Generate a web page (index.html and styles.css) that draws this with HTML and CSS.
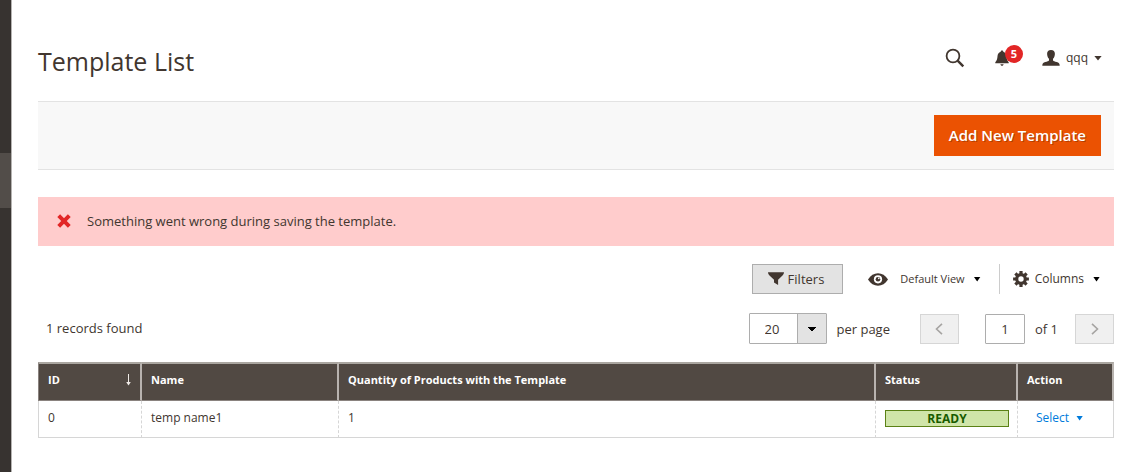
FILE: index.html
```html
<!DOCTYPE html>
<html lang="en">
<head>
<meta charset="utf-8">
<meta name="viewport" content="width=device-width, initial-scale=1">
<title>Template List</title>
<link rel="stylesheet" href="styles.css">
</head>
<body>
<div class="layout">
  <nav class="sidebar" aria-label="Main menu"><div class="sidebar-current"></div></nav>
  <main class="content">
    <header class="page-header">
      <h1 class="page-title">Template List</h1>
      <div class="header-tools">
        <button class="plain search" type="button" aria-label="Search">
          <svg width="20" height="20" viewBox="0 0 20 20" fill="none" stroke="#41362f"><circle cx="8" cy="8" r="6.400" stroke-width="1.800"/><path d="M12.600 12.600 18.300 18.300" stroke-width="2.400"/></svg>
        </button>
        <button class="plain bell" type="button" aria-label="Notifications">
          <svg width="14" height="16" viewBox="0 0 14 16" fill="#41362f"><path d="M7 0.5C7.9 .5 8.3 1 8.3 1.7 10.4 2.3 11.4 4 11.5 6.3 11.6 9 12.3 10.8 13.7 12.3V13.3H.3V12.3C1.700 10.800 2.400 9 2.500 6.300 2.600 4 3.600 2.300 5.700 1.700 5.700 1 6.100.5 7 .5Z"/><path d="M5.400 14.200H8.600C8.500 15.100 7.900 15.700 7 15.700 6.100 15.700 5.500 15.100 5.400 14.200Z"/></svg>
          <span class="badge">5</span>
        </button>
        <button class="plain account" type="button">
          <svg width="18" height="16" viewBox="0 0 18 16" fill="#41362f"><path d="M9 0C11.600 0 12.900 1.500 12.900 3.700 12.900 6 12.100 7.700 11 8.800V10.200C11.300 11.200 12.900 11.500 14.700 12 16.800 12.600 17.700 13.500 17.700 15.700H.3C.3 13.500 1.200 12.600 3.300 12 5.100 11.500 6.700 11.200 7 10.200V8.800C5.900 7.700 5.100 6 5.100 3.700 5.100 1.500 6.400 0 9 0Z"/></svg>
          <span class="account-name">qqq</span>
          <span class="caret"></span>
        </button>
      </div>
    </header>

    <div class="page-actions"><button class="primary" type="button">Add New Template</button></div>

    <div class="message" role="alert">
      <svg width="14" height="14" viewBox="0 0 14 14" stroke="#e22626" stroke-width="4"><path d="M1.700 1.700 12.300 12.300M12.300 1.700 1.700 12.300"/></svg>
      <span>Something went wrong during saving the template.</span>
    </div>

    <div class="view-tools">
      <button class="filters" type="button">
        <svg width="16" height="14" viewBox="0 0 16 14" fill="#41362f"><path d="M0 .3H16C15.900 1.700 15.400 2.500 14.500 3.400L10.100 7.800V13L6 10.500V7.800L1.500 3.400C.600 2.500.1 1.700 0 .3Z"/></svg>
        Filters
      </button>
      <button class="plain view" type="button">
        <svg width="20" height="13" viewBox="0 0 20 13"><path d="M0 6.500C2.700 2.300 6 .3 10 .3S17.300 2.300 20 6.500C17.300 10.700 14 12.700 10 12.700S2.700 10.700 0 6.500Z" fill="#41362f"/><circle cx="10" cy="6.300" r="4.100" fill="#fff"/><circle cx="10" cy="6.300" r="2.300" fill="#41362f"/><circle cx="10.800" cy="5.400" r=".8" fill="#fff"/></svg>
        <span class="view-name">Default View</span>
        <span class="caret black"></span>
      </button>
      <button class="plain columns" type="button">
        <svg width="16" height="16" viewBox="-8 -8 16 16" fill="none" stroke="#41362f"><circle r="4.300" stroke-width="3.200"/><path stroke-width="3.200" d="M0-5V-7.900M0 5V7.900M-5 0H-7.900M5 0H7.900M3.700-3.700 5.600-5.600M-3.700-3.700-5.600-5.600M3.700 3.700 5.600 5.600M-3.700 3.700-5.600 5.600"/></svg>
        <span class="columns-name">Columns</span>
        <span class="caret black"></span>
      </button>
    </div>

    <div class="list-tools">
      <div class="records">1 records found</div>
      <div class="page-size">
        <select id="page-size"><option>20</option><option>30</option><option>50</option></select>
        <label for="page-size">per page</label>
      </div>
      <div class="pager">
        <button class="step" type="button" disabled aria-label="Previous page"><svg width="8" height="12" viewBox="0 0 8 12" fill="none" stroke="#a6a4a2" stroke-width="1.600"><path d="M7 .8 1.500 6 7 11.200"/></svg></button>
        <input class="page-number" id="page-number" type="text" value="1">
        <label class="page-total" for="page-number">of 1</label>
        <button class="step" type="button" disabled aria-label="Next page"><svg width="8" height="12" viewBox="0 0 8 12" fill="none" stroke="#a6a4a2" stroke-width="1.600"><path d="M1 .8 6.500 6 1 11.200"/></svg></button>
      </div>
    </div>

    <table class="grid">
      <colgroup><col class="col-id"><col class="col-name"><col><col class="col-status"><col class="col-action"></colgroup>
      <thead>
        <tr>
          <th scope="col" aria-sort="ascending"><div class="sorted"><span>ID</span><svg width="5" height="12" viewBox="0 0 5 12"><path d="M2.500 0V10" stroke="#efeae6"/><path d="M.2 8H4.800L2.500 11.500Z" fill="#efeae6"/></svg></div></th>
          <th scope="col">Name</th>
          <th scope="col">Quantity of Products with the Template</th>
          <th scope="col">Status</th>
          <th scope="col">Action</th>
        </tr>
      </thead>
      <tbody>
        <tr>
          <td>0</td>
          <td>temp name1</td>
          <td>1</td>
          <td><div class="status">READY</div></td>
          <td><button class="plain row-action" type="button">Select <span class="caret blue"></span></button></td>
        </tr>
      </tbody>
    </table>
  </main>
</div>
</body>
</html>
```
FILE: styles.css
```css
* { box-sizing: border-box; }
body {
  margin: 0;
  background: #fff;
  color: #41362f;
  font: 13px/18px "Open Sans", "Noto Sans", sans-serif;
}
button, input, select { font: inherit; color: inherit; }
svg { display: block; flex: none; }

.layout { display: flex; min-height: 100vh; }
.sidebar {
  flex: none;
  width: 12px;
  padding-top: 153px;
  background: #373330;
  border-right: 1px solid #b5b3b1;
}
.sidebar-current { height: 55px; background: #524d49; }
.content { flex: 1; min-width: 0; padding: 0 17px 24px 26px; }

.plain {
  display: flex;
  align-items: center;
  padding: 0;
  border: 0;
  background: none;
}
.caret {
  width: 8px;
  height: 5px;
  background: #41362f;
  clip-path: polygon(0 0, 100% 0, 50% 100%);
}
.caret.black { width: 7px; background: #000; }
.caret.blue { width: 7px; background: #007bdb; }

.page-header {
  display: flex;
  justify-content: space-between;
  height: 101px;
  padding-top: 44px;
}
.page-title { margin: 0; font-size: 25px; font-weight: 400; line-height: 34px; }
.header-tools { display: flex; align-items: center; height: 28px; padding-right: 12px; }
.bell { position: relative; margin-left: 30px; }
.badge {
  position: absolute;
  left: 10px;
  top: -5px;
  width: 18px;
  height: 18px;
  border-radius: 50%;
  background: #e22626;
  color: #fff;
  font-size: 11px;
  font-weight: 700;
  line-height: 18px;
  text-align: center;
}
.account { margin-left: 33px; font-size: 12px; }
.account-name { margin: 0 6px; }

.page-actions {
  display: flex;
  justify-content: flex-end;
  padding: 13px;
  background: #f8f8f8;
  border-top: 1px solid #e3e3e3;
  border-bottom: 1px solid #e3e3e3;
}
.primary {
  height: 41px;
  padding: 0 14px 2px;
  border: 1px solid #eb5202;
  background: #eb5202;
  color: #fff;
  font-size: 15px;
  font-weight: 600;
  text-shadow: 1px 1px 0 rgba(0, 0, 0, .25);
}

.message {
  display: flex;
  align-items: center;
  gap: 16px;
  min-height: 49px;
  margin-top: 27px;
  padding: 0 19px 2px;
  background: #fcc;
}

.view-tools { display: flex; justify-content: flex-end; margin-top: 18px; padding-right: 14px; }
.filters {
  display: flex;
  align-items: center;
  gap: 4px;
  height: 30px;
  padding: 0 18px 0 15px;
  border: 1px solid #adadad;
  background: #e3e3e3;
}
.view { margin-left: 25px; padding-right: 18px; }
.view-name { margin: 0 9px 0 12px; font-size: 11px; }
.columns { padding-left: 13px; border-left: 1px solid #ccc; font-size: 12px; }
.columns-name { margin: 0 9px 0 6px; }

.list-tools { display: flex; align-items: center; margin-top: 19px; }
.records { margin-right: auto; padding: 0 0 2px 8px; }
.page-size { display: flex; align-items: center; gap: 10px; margin-right: 30px; }
.page-size select {
  appearance: none;
  width: 78px;
  height: 31px;
  padding: 0 15px;
  border: 1px solid #adadad;
  border-radius: 1px;
  background:
    conic-gradient(from -45deg at 50% 100%, #000 90deg, transparent 0) right 10px center / 8px 4px no-repeat,
    linear-gradient(90deg, #adadad 1px, #e3e3e3 1px) right / 29px 100% no-repeat,
    #fff;
}
.pager { display: flex; align-items: center; }
.step {
  display: grid;
  place-items: center;
  width: 39px;
  height: 30px;
  padding: 0;
  border: 1px solid #d6d6d6;
  background: #f0f0f0;
}
.page-number {
  width: 40px;
  height: 30px;
  margin: 0 10px 0 26px;
  padding: 0;
  border: 1px solid #adadad;
  border-radius: 1px;
  background: #fff;
  text-align: center;
}
.page-total { margin-right: 17px; }

/* The arrow of the drop-down points down */
.page-size select {
  background-image:
    conic-gradient(from -45deg at 50% 100%, #000 90deg, transparent 0),
    linear-gradient(90deg, #adadad 1px, #e3e3e3 1px);
}

.grid {
  width: 100%;
  margin-top: 18px;
  border-collapse: separate;
  border-spacing: 0;
  table-layout: fixed;
  font-size: 12px;
}
.col-id { width: 104px; }
.col-name { width: 197px; }
.col-status { width: 142px; }
.col-action { width: 96px; }
.grid th {
  height: 39px;
  padding: 0 9px 5px;
  border-top: 2px solid #aaa6a0;
  border-right: 2px solid #b8b3af;
  border-bottom: 1px solid #8a837f;
  background: #514943;
  color: #fff;
  font-size: 11px;
  font-weight: 700;
  text-align: left;
}
.grid th:first-child { border-left: 1px solid #8a837f; }
.sorted { display: flex; align-items: center; justify-content: space-between; }
.grid td {
  height: 37px;
  padding: 0 8px 2px 9px;
  border-right: 1px dashed #d6d6d6;
  border-bottom: 1px solid #d6d6d6;
}
.grid td:first-child { border-left: 1px solid #d6d6d6; }
.grid td:last-child { border-right: 1px solid #d6d6d6; }
.status {
  height: 17px;
  border: 1px solid #5b8116;
  background: #d0e5a9;
  color: #185b00;
  font-weight: 700;
  line-height: 15px;
  text-align: center;
}
.row-action { gap: 7px; padding-left: 9px; color: #007bdb; }
```
